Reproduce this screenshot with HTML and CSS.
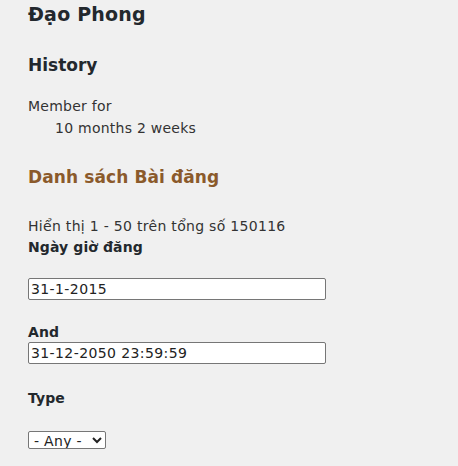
FILE: index.html
```html
<!DOCTYPE html>
<html lang="vi">
<head>
<meta charset="utf-8">
<title>Đạo Phong</title>
<link rel="stylesheet" href="styles.css">
</head>
<body>
<main class="page">
  <h1 class="title">Đạo Phong</h1>
  <h2 class="section">History</h2>
  <dl class="history">
    <dt class="history-term">Member for</dt>
    <dd class="history-value">10 months 2 weeks</dd>
  </dl>
  <h2 class="section section-brown">Danh sách Bài đăng</h2>
  <div class="summary">Hiển thị 1 - 50 trên tổng số 150116</div>
  <form class="filters">
    <label class="field-label" for="from">Ngày giờ đăng</label>
    <input class="text-input first-input" id="from" type="text" value="31-1-2015">
    <label class="field-label and-label" for="to">And</label>
    <input class="text-input" id="to" type="text" value="31-12-2050 23:59:59">
    <label class="field-label type-label" for="type">Type</label>
    <select class="select-input" id="type">
      <option>- Any -</option>
    </select>
  </form>
</main>
</body>
</html>
```
FILE: styles.css
```css
html, body {
  margin: 0;
  padding: 0;
  background: #f0f0f0;
}
body {
  font-family: "DejaVu Sans", Verdana, sans-serif;
  font-size: 14px;
  color: #333;
}
.page {
  padding: 2px 0 0 28px;
}
.title {
  margin: 0;
  font-size: 19px;
  line-height: 24px;
  font-weight: bold;
  color: #23282d;
  letter-spacing: 0.2px;
}
.section {
  margin: 27px 0 0;
  font-size: 17px;
  line-height: 24px;
  font-weight: bold;
  color: #23282d;
}
.section-brown {
  margin-top: 26px;
  color: #8b5a2b;
  letter-spacing: 0.1px;
}
.history {
  margin: 19px 0 0;
  line-height: 21px;
  letter-spacing: 0.25px;
}
.history-term {
  margin: 0;
}
.history-value {
  margin: 1px 0 0 27px;
}
.summary {
  margin-top: 27px;
  line-height: 21px;
  letter-spacing: 0.3px;
}
.filters {
  display: flex;
  flex-direction: column;
  align-items: flex-start;
  margin: 0;
}
.field-label {
  font-weight: bold;
  line-height: 20px;
  color: #23282d;
  letter-spacing: 0.1px;
}
.text-input {
  box-sizing: border-box;
  width: 298px;
  height: 22px;
  margin: 0;
  padding: 1px 2px;
  border: 1px solid #767676;
  border-radius: 2px;
  background: #fff;
  font-family: "DejaVu Sans", Verdana, sans-serif;
  font-size: 14px;
  letter-spacing: 0.4px;
  color: #222;
}
.first-input {
  margin-top: 21px;
}
.and-label {
  margin-top: 22px;
}
.type-label {
  margin-top: 24px;
}
.select-input {
  box-sizing: border-box;
  width: 78px;
  height: 18px;
  margin-top: 23px;
  padding: 0 0 0 1px;
  border: 1px solid #767676;
  border-radius: 2px;
  background: #fff;
  font-family: "DejaVu Sans", Verdana, sans-serif;
  font-size: 14px;
  letter-spacing: 0.3px;
  color: #222;
}
```
